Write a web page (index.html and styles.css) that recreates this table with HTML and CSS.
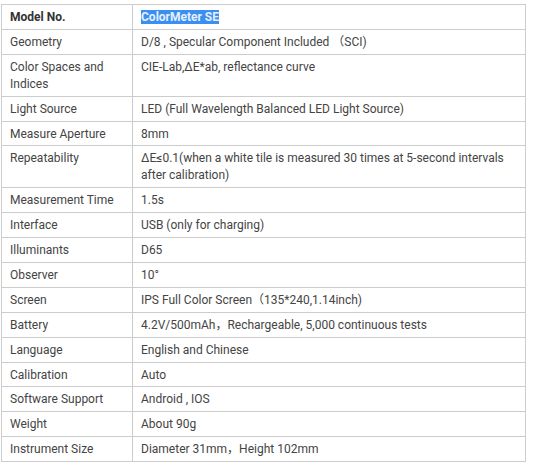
FILE: index.html
```html
<!DOCTYPE html>
<html>
<head>
<meta charset="utf-8">
<link rel="stylesheet" href="styles.css">
</head>
<body>
<table class="spec">
<tr class="head"><td class="k">Model No.</td><td class="v"><span class="sel">ColorMeter SE</span></td></tr>
<tr><td class="k">Geometry</td><td class="v">D/8 , Specular Component Included （SCI)</td></tr>
<tr><td class="k">Color Spaces and Indices</td><td class="v">CIE-Lab,ΔE*ab, reflectance curve</td></tr>
<tr><td class="k">Light Source</td><td class="v">LED (Full Wavelength Balanced LED Light Source)</td></tr>
<tr><td class="k">Measure Aperture</td><td class="v">8mm</td></tr>
<tr><td class="k">Repeatability</td><td class="v">ΔE≤0.1(when a white tile is measured 30 times at 5-second intervals after calibration)</td></tr>
<tr><td class="k">Measurement Time</td><td class="v">1.5s</td></tr>
<tr><td class="k">Interface</td><td class="v">USB (only for charging)</td></tr>
<tr><td class="k">Illuminants</td><td class="v">D65</td></tr>
<tr><td class="k">Observer</td><td class="v">10°</td></tr>
<tr><td class="k">Screen</td><td class="v">IPS Full Color Screen（135*240,1.14inch)</td></tr>
<tr><td class="k">Battery</td><td class="v">4.2V/500mAh，Rechargeable, 5,000 continuous tests</td></tr>
<tr><td class="k">Language</td><td class="v">English and Chinese</td></tr>
<tr><td class="k">Calibration</td><td class="v">Auto</td></tr>
<tr><td class="k">Software Support</td><td class="v">Android , IOS</td></tr>
<tr><td class="k">Weight</td><td class="v">About 90g</td></tr>
<tr><td class="k">Instrument Size</td><td class="v">Diameter 31mm，Height 102mm</td></tr>
</table>
</body>
</html>
```
FILE: styles.css
```css
html, body {
  margin: 0;
  background: #fff;
}
body {
  padding: 4px 0 0 1px;
  font-family: Roboto, "Noto Sans CJK SC", sans-serif;
  font-size: 12px;
  color: #444;
}
.spec {
  border-collapse: collapse;
  width: 525px;
  table-layout: fixed;
}
.spec td {
  border: 1px solid #ccc;
  padding: 4px 8px 2.9px 8px;
  line-height: 17px;
  vertical-align: top;
}
.spec td.k {
  width: 114px;
}
.head td {
  font-weight: bold;
  color: #333;
}
.sel {
  background: #3b8ff0;
  color: #e6f0ff;
}
```
